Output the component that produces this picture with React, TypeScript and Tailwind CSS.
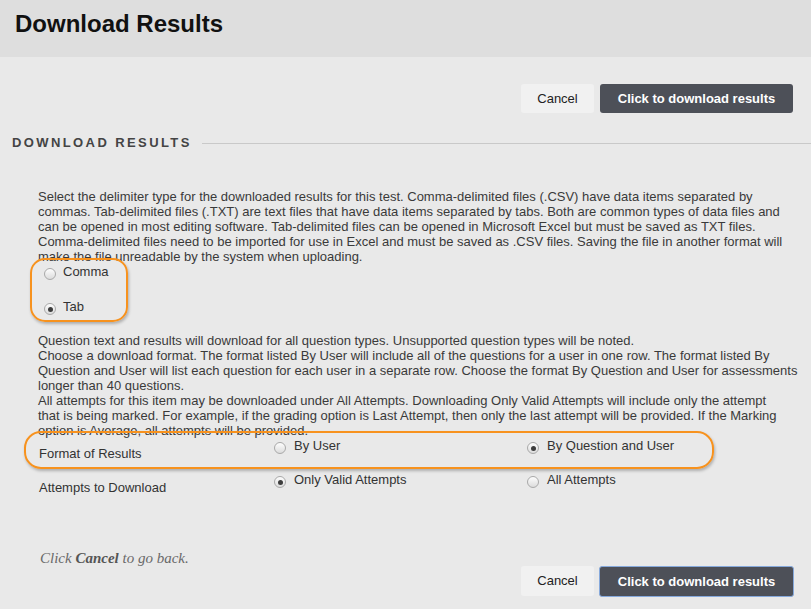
import React from "react";

function Radio({ checked }: { checked?: boolean }) {
  return (
    <span className="mt-[4px] flex h-[12px] w-[12px] shrink-0 items-center justify-center rounded-full border border-[#a9a9a9] bg-linear-to-b from-[#fdfdfd] to-[#dcdcdc]">
      {checked && <span className="h-[5px] w-[5px] rounded-full bg-[#3c3c3c]" />}
    </span>
  );
}

function Option({ label, checked }: { label: string; checked?: boolean }) {
  return (
    <div className="flex items-start">
      <Radio checked={checked} />
      <span className="ml-[8px] text-[13px] leading-[15px] text-[#333]">{label}</span>
    </div>
  );
}

const p1 = [
  "Select the delimiter type for the downloaded results for this test. Comma-delimited files (.CSV) have data items separated by",
  "commas. Tab-delimited files (.TXT) are text files that have data items separated by tabs. Both are common types of data files and",
  "can be opened in most editing software. Tab-delimited files can be opened in Microsoft Excel but must be saved as TXT files.",
  "Comma-delimited files need to be imported for use in Excel and must be saved as .CSV files. Saving the file in another format will",
  "make the file unreadable by the system when uploading.",
];

const p2 = [
  "Question text and results will download for all question types. Unsupported question types will be noted.",
  "Choose a download format. The format listed By User will include all of the questions for a user in one row. The format listed By",
  "Question and User will list each question for each user in a separate row. Choose the format By Question and User for assessments",
  "longer than 40 questions.",
  "All attempts for this item may be downloaded under All Attempts. Downloading Only Valid Attempts will include only the attempt",
  "that is being marked. For example, if the grading option is Last Attempt, then only the last attempt will be provided. If the Marking",
  "option is Average, all attempts will be provided.",
];

function Lines({ lines }: { lines: string[] }) {
  return (
    <p className="w-[765px] text-[13px] leading-[15px] text-[#3a3a3a]">
      {lines.map((l, i) => (
        <span key={i} className="block whitespace-nowrap">
          {l}
        </span>
      ))}
    </p>
  );
}

export default function App() {
  return (
    <div className="relative h-[609px] w-[811px] overflow-hidden bg-[#e9e9e9] font-['Liberation_Sans',Arial,sans-serif]">
      <header className="h-[57px] bg-[#dedede] pl-[15px] pt-[10px]">
        <h1 className="text-[24px] font-bold leading-[28px] text-[#111]">Download Results</h1>
      </header>

      <div className="mt-[27px] flex justify-end gap-[6px] pr-[18px]">
        <button className="h-[29px] w-[73px] rounded-[3px] bg-[#f1f1f1] text-[13px] text-[#222]">Cancel</button>
        <button className="h-[29px] w-[193px] rounded-[3px] bg-[#4d5058] text-[13px] font-bold text-white">
          Click to download results
        </button>
      </div>

      <div className="mt-[22px] flex h-[16px] items-center pl-[12px]">
        <h2 className="text-[13px] font-bold leading-[16px] tracking-[2.4px] text-[#444]">DOWNLOAD RESULTS</h2>
        <div className="ml-[10px] h-px flex-1 bg-[#c9c9c9]" />
      </div>

      <div className="mt-[38px] pl-[38px]">
        <Lines lines={p1} />
      </div>

      <div className="flex flex-col gap-[19px] pl-[44px]">
        <div className="flex items-start">
          <Radio />
          <span className="ml-[7px] text-[13px] leading-[15px] text-[#333]">Comma</span>
        </div>
        <div className="flex items-start">
          <Radio checked />
          <span className="ml-[7px] text-[13px] leading-[15px] text-[#333]">Tab</span>
        </div>
      </div>

      <div className="mt-[18px] pl-[38px]">
        <Lines lines={p2} />
      </div>

      <div className="flex flex-col pl-[39px]">
        <div className="flex h-[34px]">
          <div className="w-[235px] pt-[8px] text-[13px] leading-[15px] text-[#333]">Format of Results</div>
          <div className="w-[253px]">
            <Option label="By User" />
          </div>
          <div>
            <Option label="By Question and User" checked />
          </div>
        </div>
        <div className="flex h-[34px]">
          <div className="w-[235px] pt-[8px] text-[13px] leading-[15px] text-[#333]">Attempts to Download</div>
          <div className="w-[253px]">
            <Option label="Only Valid Attempts" checked />
          </div>
          <div>
            <Option label="All Attempts" />
          </div>
        </div>
      </div>

      <p className="mt-[43px] pl-[40px] font-['Liberation_Serif',Georgia,serif] text-[15px] italic leading-[18px] text-[#6a6a6a]">
        Click <span className="font-bold text-[#555]">Cancel</span> to go back.
      </p>

      <div className="-mt-[1px] flex justify-end gap-[5px] pr-[17px]">
        <button className="h-[30px] w-[73px] rounded-[3px] bg-[#f1f1f1] text-[13px] text-[#222]">Cancel</button>
        <button className="h-[31px] w-[195px] rounded-[3px] border border-[#86a9dc] bg-[#4d5058] text-[13px] font-bold text-white">
          Click to download results
        </button>
      </div>

      {/* annotation outlines */}
      <div className="pointer-events-none absolute left-[30px] top-[258px] h-[64px] w-[98px] rounded-[15px] border-2 border-[#f7921e] shadow-[1px_2px_3px_rgba(0,0,0,0.25)]" />
      <div className="pointer-events-none absolute left-[24px] top-[431px] h-[38px] w-[690px] rounded-[17px] border-2 border-[#f7921e] shadow-[1px_2px_3px_rgba(0,0,0,0.25)]" />
    </div>
  );
}
